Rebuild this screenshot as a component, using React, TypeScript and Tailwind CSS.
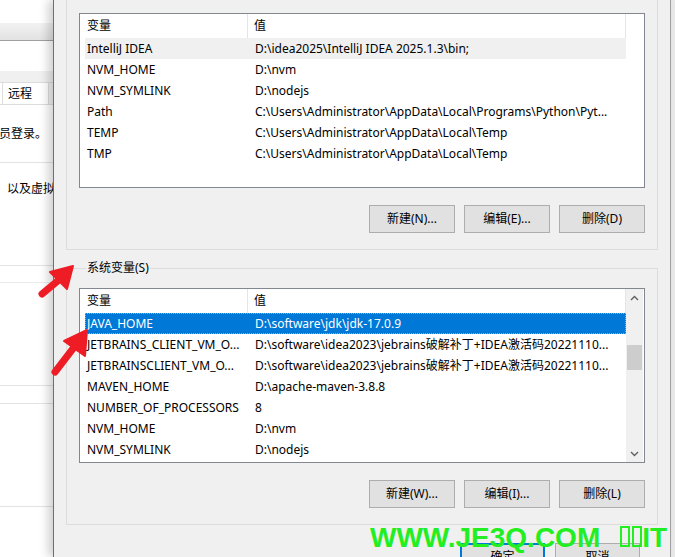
import React from "react";

type Row = [string, string];

const userVars: Row[] = [
    ["IntelliJ IDEA", "D:\\idea2025\\IntelliJ IDEA 2025.1.3\\bin;"],
    ["NVM_HOME", "D:\\nvm"],
    ["NVM_SYMLINK", "D:\\nodejs"],
    ["Path", "C:\\Users\\Administrator\\AppData\\Local\\Programs\\Python\\Pyt..."],
    ["TEMP", "C:\\Users\\Administrator\\AppData\\Local\\Temp"],
    ["TMP", "C:\\Users\\Administrator\\AppData\\Local\\Temp"],
];

const sysVars: Row[] = [
    ["JAVA_HOME", "D:\\software\\jdk\\jdk-17.0.9"],
    ["JETBRAINS_CLIENT_VM_O...", "D:\\software\\idea2023\\jebrains破解补丁+IDEA激活码20221110..."],
    ["JETBRAINSCLIENT_VM_O...", "D:\\software\\idea2023\\jebrains破解补丁+IDEA激活码20221110..."],
    ["MAVEN_HOME", "D:\\apache-maven-3.8.8"],
    ["NUMBER_OF_PROCESSORS", "8"],
    ["NVM_HOME", "D:\\nvm"],
    ["NVM_SYMLINK", "D:\\nodejs"],
];

function Chevron({ up }: { up?: boolean }) {
    return (
        <svg width="9" height="6" viewBox="0 0 9 6">
            <path
                d={up ? "M1 5 L4.5 1.5 L8 5" : "M1 1 L4.5 4.5 L8 1"}
                fill="none"
                stroke="#606060"
                strokeWidth="1.4"
            />
        </svg>
    );
}

function VarList({
    rows,
    hover,
    selected,
    scroll,
}: {
    rows: Row[];
    hover?: number;
    selected?: number;
    scroll?: boolean;
}) {
    return (
        <div className="flex h-[175px] overflow-hidden border border-[#828790] bg-white">
            <div className="flex w-[546px] flex-col">
                <div className="flex h-[24px] shrink-0 items-center">
                    <div className="flex h-full w-[168px] items-center border-r border-[#e5e5e5] pl-[7px]">
                        变量
                    </div>
                    <div className="flex h-full flex-1 items-center border-r border-[#e5e5e5] pl-[6px]">
                        值
                    </div>
                </div>
                {rows.map(([name, value], i) => {
                    const sel = i === selected;
                    const hov = i === hover;
                    return (
                        <div
                            key={i}
                            className={
                                "ml-[5px] flex h-[21px] shrink-0 items-center whitespace-nowrap " +
                                (sel
                                    ? "bg-[#0078d7] text-white outline-1 -outline-offset-1 outline-dotted outline-[#e8a040]"
                                    : hov
                                      ? "bg-[#f0f0f0]"
                                      : "")
                            }
                        >
                            <div className="w-[170px] overflow-hidden pl-[2px]">{name}</div>
                            <div className="flex-1 overflow-hidden">{value}</div>
                        </div>
                    );
                })}
            </div>
            {scroll ? (
                <div className="flex w-[17px] flex-col bg-[#f0f0f0]">
                    <div className="flex h-[17px] items-center justify-center">
                        <Chevron up />
                    </div>
                    <div className="flex-1 px-[1px] pt-[39px]">
                        <div className="h-[25px] bg-[#cdcdcd]" />
                    </div>
                    <div className="flex h-[17px] items-center justify-center">
                        <Chevron />
                    </div>
                </div>
            ) : null}
        </div>
    );
}

function Btn({ label, primary }: { label: string; primary?: boolean }) {
    return (
        <div
            className={
                "flex h-[28px] items-center justify-center bg-[#e1e1e1] " +
                (primary
                    ? "w-[85px] border-2 border-[#0078d7]"
                    : "w-[86px] border border-[#adadad]")
            }
        >
            {label}
        </div>
    );
}

function Group({
    title,
    rows,
    buttons,
    hover,
    selected,
    scroll,
}: {
    title: string;
    rows: Row[];
    buttons: string[];
    hover?: number;
    selected?: number;
    scroll?: boolean;
}) {
    return (
        <div className="border border-[#dcdcdc] px-[12px] pb-[16px]">
            <div className="-mt-[9px] ml-[7px] h-[16px] w-fit whitespace-nowrap bg-[#f0f0f0] px-[1px] leading-[16px]">
                {title}
            </div>
            <div className="mt-[12px]">
                <VarList rows={rows} hover={hover} selected={selected} scroll={scroll} />
            </div>
            <div className="mt-[17px] flex justify-end gap-[9px]">
                {buttons.map((b) => (
                    <Btn key={b} label={b} />
                ))}
            </div>
        </div>
    );
}

function Arrows() {
    return (
        <svg
            className="pointer-events-none absolute left-0 top-0 z-20"
            width="675"
            height="557"
            viewBox="0 0 675 557"
        >
            <g fill="#ee1c25" stroke="#ee1c25" strokeLinejoin="round">
                <line x1="42" y1="294" x2="60" y2="279" strokeWidth="7" strokeLinecap="round" />
                <polygon points="73,266 67,289 50,272" strokeWidth="2" />
                <line x1="55" y1="372" x2="75" y2="346" strokeWidth="7" strokeLinecap="round" />
                <polygon points="87,330 85,356 64,341" strokeWidth="2" />
            </g>
        </svg>
    );
}

function Watermark() {
    return (
        <div className="pointer-events-none absolute left-[370px] top-[524px] z-20 flex items-baseline whitespace-nowrap font-['Liberation_Sans',Arial,sans-serif] text-[28px] font-bold leading-none text-[#22ee22]">
            <span>WWW.JE3Q.COM</span>
            <span className="ml-[20px] inline-block h-[21px] w-[10px] border-2 border-[#22ee22]" />
            <span className="ml-[2px] inline-block h-[21px] w-[10px] border-2 border-[#22ee22]" />
            <span>IT</span>
        </div>
    );
}

function BackWindow() {
    return (
        <div className="flex w-[53px] shrink-0 flex-col overflow-hidden bg-white text-black">
            <div className="h-[23px]" />
            <div className="h-[18px] border-b border-[#a0a0a0] bg-gradient-to-b from-[#f2f2f2] to-[#e2e2e2]" />
            <div className="h-[30px]" />
            <div className="h-[11px] bg-[#f0f0f0]" />
            <div className="flex h-[23px] border-y border-[#dcdcdc] bg-[#f0f0f0]">
                <div className="w-[3px] border-r border-[#dcdcdc] bg-white" />
                <div className="flex w-[46px] items-center border-r border-[#dcdcdc] bg-white pl-[5px]">
                    远程
                </div>
            </div>
            <div className="flex h-[57px] items-center whitespace-nowrap">
                <span className="-ml-[1px]">员登录。</span>
            </div>
            <div className="flex h-[103px] items-start border-t border-[#e3e3e3] pt-[17px]">
                <span className="ml-[7px] whitespace-nowrap">以及虚拟机</span>
            </div>
            <div className="h-[17px] border-t border-[#e3e3e3]" />
            <div className="h-[103px] border-t border-[#ececec]" />
            <div className="h-[18px] border-t border-[#e3e3e3]" />
            <div className="h-[103px] border-t border-[#e3e3e3]" />
            <div className="flex-1 border-t border-[#e3e3e3]" />
        </div>
    );
}

export default function App() {
    return (
        <div className="relative flex h-[557px] w-[675px] overflow-hidden bg-white font-['Noto_Sans','Noto_Sans_CJK_SC',sans-serif] text-[12px] text-black">
            <BackWindow />
            <div className="z-10 flex w-[618px] shrink-0 flex-col border-l border-r border-l-[#6e6e6e] border-r-[#a0a0a0] bg-[#f0f0f0] pl-[12px] pr-[12px] shadow-[-5px_0_9px_rgba(0,0,0,0.18)]">
                <div className="-mt-[7px]">
                    <Group
                        title="Administrator 的用户变量(U)"
                        rows={userVars}
                        buttons={["新建(N)...", "编辑(E)...", "删除(D)"]}
                        hover={0}
                    />
                </div>
                <div className="mt-[18px]">
                    <Group
                        title="系统变量(S)"
                        rows={sysVars}
                        buttons={["新建(W)...", "编辑(I)...", "删除(L)"]}
                        selected={0}
                        scroll
                    />
                </div>
                <div className="mr-[18px] mt-[18px] flex justify-end gap-[10px]">
                    <Btn label="确定" primary />
                    <div className="flex h-[28px] w-[85px] items-center justify-center border border-[#adadad] bg-[#e1e1e1]">
                        取消
                    </div>
                </div>
            </div>
            <div className="flex-1 bg-[#e9e9e9]" />
            <Arrows />
            <Watermark />
        </div>
    );
}
